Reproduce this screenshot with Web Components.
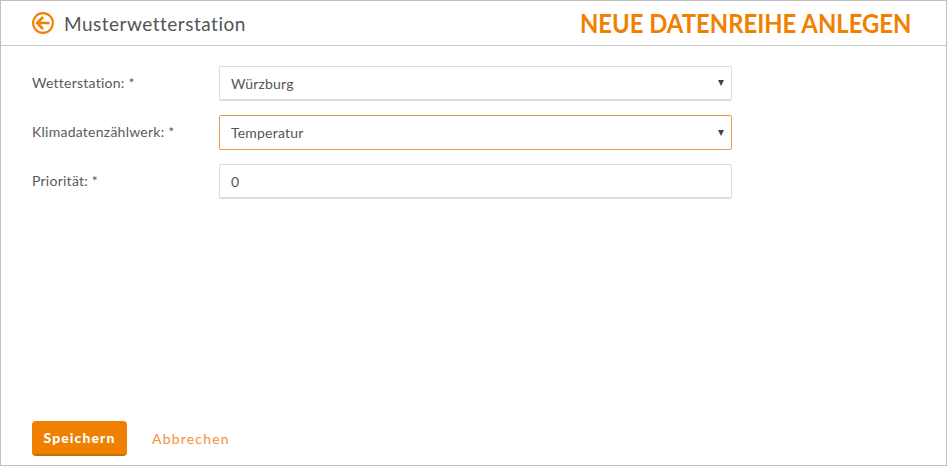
<!DOCTYPE html>
<html lang="de"><head><meta charset="utf-8"><style>
html,body{margin:0;padding:0;background:#fff}
body{font-family:Lato,"Open Sans","Liberation Sans",sans-serif;color:#555}
</style></head><body>
<template id="t-frame"><style>
:host{display:flex;flex-direction:column;box-sizing:border-box;width:947px;height:466px;border:1px solid #bfbfbf;background:#fff;overflow:hidden}
.main{flex:1;display:flex;flex-direction:column;gap:14px;padding:20px 0 0 31px}
.foot{display:flex;align-items:center;gap:25px;padding:0 0 9px 31px}
</style><slot name="header"></slot><div class="main"><slot></slot></div><div class="foot"><slot name="foot"></slot></div></template>

<template id="t-header"><style>
:host{display:flex;align-items:center;box-sizing:border-box;height:45px;border-bottom:1px solid #c8c8c8;padding:0 35px 0 31px}
svg{width:22px;height:22px;flex:none;margin-right:10px}
.t{font-size:19px;color:#555;letter-spacing:.5px;flex:1}
.h{display:inline-block;font-size:26px;font-weight:700;color:#f08000;letter-spacing:0;white-space:nowrap;transform:scaleX(.917);transform-origin:right center}
</style>
<svg viewBox="0 0 22 22" fill="none" stroke="#f08000"><circle cx="11" cy="11" r="9.9" stroke-width="2.1"/><path d="M11 5 5.2 11l5.8 6M6 11H17.5" stroke-width="2.6"/></svg>
<span class="t"><slot name="title"></slot></span><span class="h"><slot name="action"></slot></span></template>

<template id="t-row"><style>
:host{display:flex;align-items:flex-start}
.l{width:187px;flex:none;font-size:14px;line-height:20px;color:#5a5a5a;letter-spacing:.25px;padding-top:7px}
</style><span class="l"><slot name="label"></slot></span><slot></slot></template>

<template id="t-field"><style>
:host{display:flex;align-items:center;box-sizing:border-box;width:513px;height:35px;border:1px solid #ddd;border-bottom:2px solid #ddd;border-radius:2px;background:#fff;padding:0 7px 0 11px;font-size:14px;letter-spacing:.2px;color:#555}
:host([focused]){border:1px solid #e49a4a}
.v{flex:1}
.a{width:0;height:0;border-left:3.5px solid transparent;border-right:3.5px solid transparent;border-top:6px solid #444}
:host([plain]) .a{display:none}
</style><span class="v"><slot></slot></span><span class="a"></span></template>

<template id="t-btn"><style>
:host{display:inline-flex;align-items:center;justify-content:center;box-sizing:border-box;width:95px;height:35px;background:#f08000;border-bottom:2px solid #c96f08;border-radius:4px;color:#fff;font-size:14px;font-weight:900;letter-spacing:1.1px}
</style><slot></slot></template>

<template id="t-link"><style>
:host{display:inline-block;color:#f5913a;font-size:14px;letter-spacing:1.2px}
</style><slot></slot></template>

<app-frame>
  <app-header slot="header"><span slot="title">Musterwetterstation</span><span slot="action">NEUE DATENREIHE ANLEGEN</span></app-header>
  <form-row><span slot="label">Wetterstation: *</span><form-field>Würzburg</form-field></form-row>
  <form-row><span slot="label">Klimadatenzählwerk: *</span><form-field focused>Temperatur</form-field></form-row>
  <form-row><span slot="label">Priorität: *</span><form-field plain>0</form-field></form-row>
  <app-btn slot="foot">Speichern</app-btn>
  <app-link slot="foot">Abbrechen</app-link>
</app-frame>
<script>
for(const [n,id] of [['app-frame','t-frame'],['app-header','t-header'],['form-row','t-row'],['form-field','t-field'],['app-btn','t-btn'],['app-link','t-link']]){
  customElements.define(n,class extends HTMLElement{constructor(){super();this.attachShadow({mode:'open'}).appendChild(document.getElementById(id).content.cloneNode(true));}});
}
</script>
</body></html>
